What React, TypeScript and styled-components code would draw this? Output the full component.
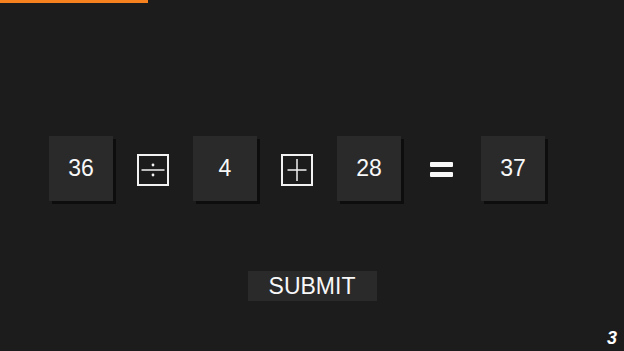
import styled, { createGlobalStyle } from 'styled-components';

const GlobalStyle = createGlobalStyle`
  html, body {
    margin: 0;
    padding: 0;
    background: #1c1c1d;
  }
  #root {
    height: 351px;
  }
`;

const Page = styled.main`
  display: flex;
  flex-direction: column;
  box-sizing: border-box;
  width: 624px;
  height: 351px;
  overflow: hidden;
  background: #1c1c1d;
  color: #fff;
  font-family: 'Liberation Sans', Arial, sans-serif;
`;

const Progress = styled.div<{ $width: number }>`
  width: ${(p) => p.$width}px;
  height: 3px;
  background: #f5821f;
  flex-shrink: 0;
`;

const Equation = styled.div`
  display: flex;
  align-items: center;
  margin-top: 133px;
  padding-left: 45px;
  height: 65px;
`;

const Slot = styled.div`
  width: 72px;
  display: flex;
  justify-content: center;
  align-items: center;
`;

const Tile = styled.div`
  width: 64px;
  height: 65px;
  display: flex;
  align-items: center;
  justify-content: center;
  background: #2a2a2b;
  box-shadow: 3px 3px 0 #0d0d0d;
  font-size: 23px;
  color: #f8f8f8;
`;

const OpBox = styled.div`
  width: 32px;
  height: 32px;
  box-sizing: border-box;
  border: 2px solid #f2f2f2;
  display: flex;
  align-items: center;
  justify-content: center;
  margin-top: 2px;
`;

const Equals = styled.div`
  display: flex;
  flex-direction: column;
  gap: 5px;
  margin-top: 2px;
  span {
    display: block;
    width: 23px;
    height: 5px;
    border-radius: 1px;
    background: #f8f8f8;
  }
`;

const SubmitButton = styled.button`
  align-self: center;
  margin-top: 70px;
  width: 129px;
  height: 30px;
  border: none;
  padding: 0;
  background: #2a2a2b;
  color: #f8f8f8;
  font-family: 'Liberation Sans', Arial, sans-serif;
  font-size: 23px;
  line-height: 30px;
  cursor: pointer;
`;

const Level = styled.div`
  margin-top: auto;
  align-self: flex-end;
  padding: 0 7px 4px 0;
  font-size: 18px;
  font-weight: bold;
  font-style: italic;
  line-height: 18px;
`;

const DivideIcon = () => (
  <svg width="28" height="28" viewBox="0 0 28 28">
    <line x1="2.5" y1="14" x2="25.5" y2="14" stroke="#f2f2f2" strokeWidth="1.5" />
    <circle cx="14" cy="9" r="1.4" fill="#f2f2f2" />
    <circle cx="14" cy="19" r="1.4" fill="#f2f2f2" />
  </svg>
);

const PlusIcon = () => (
  <svg width="28" height="28" viewBox="0 0 28 28">
    <line x1="4.5" y1="14" x2="23.5" y2="14" stroke="#f2f2f2" strokeWidth="1.5" />
    <line x1="14" y1="3" x2="14" y2="25" stroke="#f2f2f2" strokeWidth="1.5" />
  </svg>
);

const App = () => {
  return (
    <>
      <GlobalStyle />
      <Page>
        <Progress $width={148} />
        <Equation>
          <Slot>
            <Tile>36</Tile>
          </Slot>
          <Slot>
            <OpBox>
              <DivideIcon />
            </OpBox>
          </Slot>
          <Slot>
            <Tile>4</Tile>
          </Slot>
          <Slot>
            <OpBox>
              <PlusIcon />
            </OpBox>
          </Slot>
          <Slot>
            <Tile>28</Tile>
          </Slot>
          <Slot>
            <Equals>
              <span />
              <span />
            </Equals>
          </Slot>
          <Slot>
            <Tile>37</Tile>
          </Slot>
        </Equation>
        <SubmitButton>SUBMIT</SubmitButton>
        <Level>3</Level>
      </Page>
    </>
  );
};

export default App;
